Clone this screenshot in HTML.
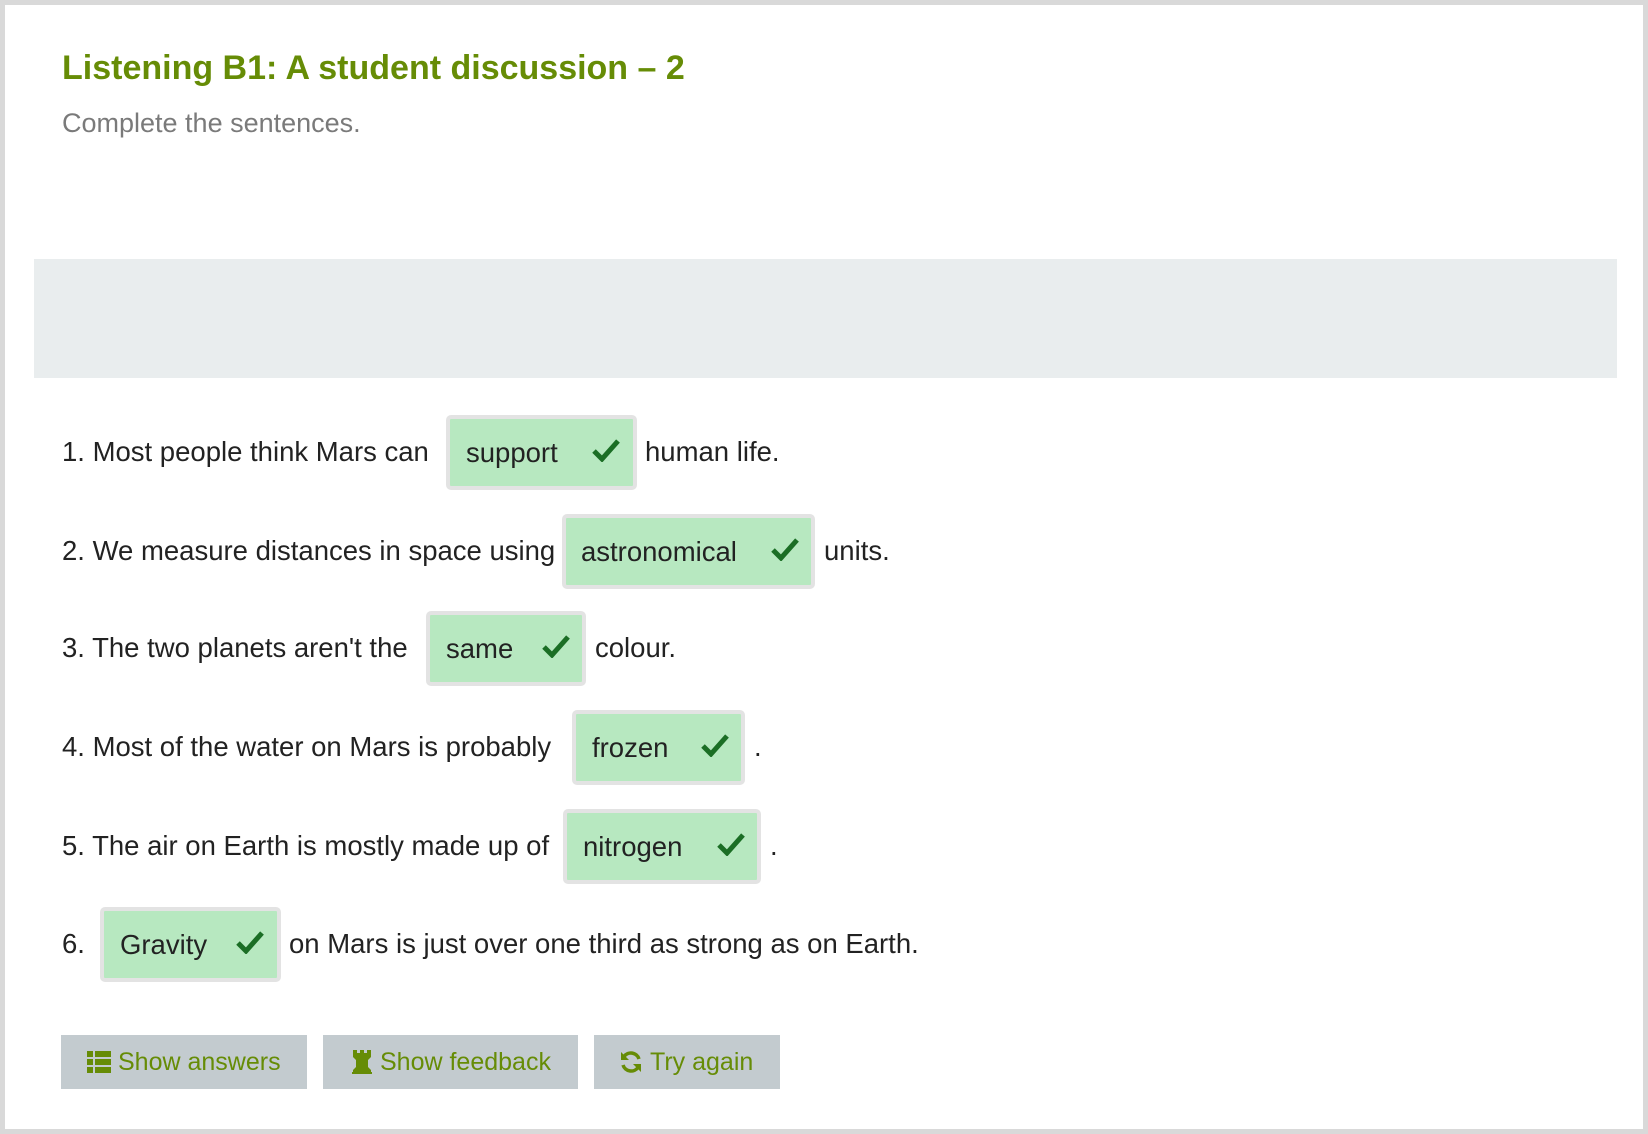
<!DOCTYPE html>
<html><head><meta charset="utf-8"><style>
body{margin:0;width:1648px;height:1132px;background:#fff;font-family:"Liberation Sans",sans-serif;position:relative;overflow:hidden}
.frame{position:absolute;left:0;top:0;width:1638px;height:1124px;border:5px solid #d9d9d9;background:#fff}
.a{position:absolute;white-space:nowrap}
h1{position:absolute;left:62px;top:49px;margin:0;font-size:34px;font-weight:bold;color:#668c06;white-space:nowrap}
.sub{left:62px;top:108px;font-size:27px;color:#7a7a7a}
.band{position:absolute;left:34px;top:259px;width:1583px;height:119px;background:#e9edee}
.t{font-size:27.5px;color:#222;line-height:30px}
.box{position:absolute;height:67px;border:4px solid #e3e3e3;border-radius:5px;background:#b7e8c0;box-sizing:content-box}
.bt{font-size:27.5px;color:#222;line-height:30px}
.ck{position:absolute;width:28px;height:24px}
.btn{position:absolute;top:1035px;height:54px;background:#c3cbcf;color:#668c06;font-size:25px;line-height:54px}
</style></head><body>
<div class="frame"></div>
<h1>Listening B1: A student discussion – 2</h1>
<div class="a sub">Complete the sentences.</div>
<div class="band"></div>

<div class="a t" style="left:62px;top:437px">1. Most people think Mars can</div>
<div class="box" style="left:446px;top:415px;width:183px"></div>
<div class="a bt" style="left:466px;top:438px">support</div>
<svg class="ck" style="left:592px;top:438px" viewBox="0 0 28 24"><path d="M2 13 L10 21 L26 3" fill="none" stroke="#1b6e25" stroke-width="5"/></svg>
<div class="a t" style="left:645px;top:437px">human life.</div>

<div class="a t" style="left:62px;top:536px">2. We measure distances in space using</div>
<div class="box" style="left:562px;top:514px;width:245px"></div>
<div class="a bt" style="left:581px;top:537px">astronomical</div>
<svg class="ck" style="left:771px;top:537px" viewBox="0 0 28 24"><path d="M2 13 L10 21 L26 3" fill="none" stroke="#1b6e25" stroke-width="5"/></svg>
<div class="a t" style="left:824px;top:536px">units.</div>

<div class="a t" style="left:62px;top:633px">3. The two planets aren't the</div>
<div class="box" style="left:426px;top:611px;width:152px"></div>
<div class="a bt" style="left:446px;top:634px">same</div>
<svg class="ck" style="left:542px;top:634px" viewBox="0 0 28 24"><path d="M2 13 L10 21 L26 3" fill="none" stroke="#1b6e25" stroke-width="5"/></svg>
<div class="a t" style="left:595px;top:633px">colour.</div>

<div class="a t" style="left:62px;top:732px">4. Most of the water on Mars is probably</div>
<div class="box" style="left:572px;top:710px;width:165px"></div>
<div class="a bt" style="left:592px;top:733px">frozen</div>
<svg class="ck" style="left:701px;top:733px" viewBox="0 0 28 24"><path d="M2 13 L10 21 L26 3" fill="none" stroke="#1b6e25" stroke-width="5"/></svg>
<div class="a t" style="left:754px;top:732px">.</div>

<div class="a t" style="left:62px;top:831px">5. The air on Earth is mostly made up of</div>
<div class="box" style="left:563px;top:809px;width:190px"></div>
<div class="a bt" style="left:583px;top:832px">nitrogen</div>
<svg class="ck" style="left:717px;top:832px" viewBox="0 0 28 24"><path d="M2 13 L10 21 L26 3" fill="none" stroke="#1b6e25" stroke-width="5"/></svg>
<div class="a t" style="left:770px;top:831px">.</div>

<div class="a t" style="left:62px;top:929px">6.</div>
<div class="box" style="left:100px;top:907px;width:173px"></div>
<div class="a bt" style="left:120px;top:930px">Gravity</div>
<svg class="ck" style="left:236px;top:930px" viewBox="0 0 28 24"><path d="M2 13 L10 21 L26 3" fill="none" stroke="#1b6e25" stroke-width="5"/></svg>
<div class="a t" style="left:289px;top:929px">on Mars is just over one third as strong as on Earth.</div>

<div class="btn" style="left:61px;width:246px">
<svg style="position:absolute;left:26px;top:16px" width="24" height="22" viewBox="0 0 24 22"><g fill="#668c06"><rect x="0" y="0" width="6" height="6"/><rect x="8" y="0" width="16" height="6"/><rect x="0" y="8" width="6" height="6"/><rect x="8" y="8" width="16" height="6"/><rect x="0" y="16" width="6" height="6"/><rect x="8" y="16" width="16" height="6"/></g></svg>
<span style="position:absolute;left:57px">Show answers</span></div>
<div class="btn" style="left:323px;width:255px">
<svg style="position:absolute;left:28px;top:15px" width="22" height="24" viewBox="0 0 22 24"><path fill="#668c06" d="M2 0h4v3h3V0h4v3h3V0h4v7l-3 3v7l3 3v2H2v-2l3-3v-7L2 7z"/><rect x="1" y="22" width="20" height="2" fill="#668c06"/></svg>
<span style="position:absolute;left:57px">Show feedback</span></div>
<div class="btn" style="left:594px;width:186px">
<svg style="position:absolute;left:25px;top:15px" width="24" height="24" viewBox="0 0 24 24"><path d="M20 9A8.5 8.5 0 0 0 5 6.5M4 15a8.5 8.5 0 0 0 15 2.5" fill="none" stroke="#668c06" stroke-width="3.5"/><path fill="#668c06" d="M2 2v8h8zM22 22v-8h-8z"/></svg>
<span style="position:absolute;left:56px">Try again</span></div>
</body></html>
